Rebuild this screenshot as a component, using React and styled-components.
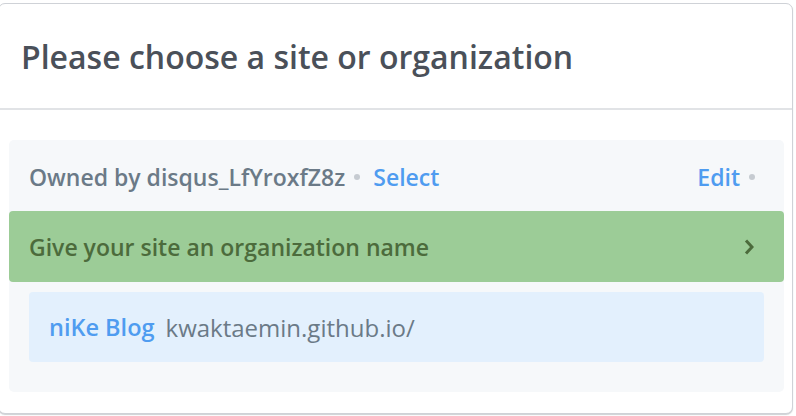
import React from "react";
import styled, { createGlobalStyle } from "styled-components";

const GlobalStyle = createGlobalStyle`
  html, body {
    margin: 0;
    padding: 0;
    background: #ffffff;
  }
  body {
    font-family: "Source Sans Pro", "Open Sans", "Noto Sans", sans-serif;
    -webkit-font-smoothing: antialiased;
  }
`;

const Page = styled.div`
  width: 796px;
  height: 416px;
  overflow: hidden;
  padding-top: 3px;
  box-sizing: border-box;
`;

const Card = styled.section`
  width: 795px;
  height: 411px;
  margin-left: -2px;
  box-sizing: border-box;
  background: #fff;
  border: 1px solid #cfd2d7;
  border-radius: 7px;
  box-shadow: 0 1px 1px rgba(60, 70, 85, 0.25);
  display: flex;
  flex-direction: column;
`;

const Header = styled.header`
  height: 106px;
  box-sizing: border-box;
  display: flex;
  align-items: center;
  padding: 0 0 0 22px;
  border-bottom: 2px solid #e1e3e6;
`;

const Title = styled.h1`
  margin: 0;
  font-size: 32px;
  font-weight: 600;
  color: #4a5059;
`;

const Body = styled.div`
  padding: 30px 8px 0 10px;
`;

const Panel = styled.div`
  background: #f6f8fa;
  border-radius: 5px;
  padding-bottom: 30px;
`;

const OwnerRow = styled.div`
  height: 68px;
  display: flex;
  align-items: center;
  padding: 3px 29px 0 20px;
  font-size: 23px;
  font-weight: 600;
  color: #6b7a87;
`;

const Dot = styled.span`
  display: inline-block;
  flex: none;
  width: 6px;
  height: 6px;
  border-radius: 50%;
  background: #c6cbd1;
  margin: 0 ${(p) => p.$right ?? 13}px 0 9px;
`;

const Link = styled.a`
  color: #4f9cf0;
  text-decoration: none;
  cursor: pointer;
`;

const Spacer = styled.div`
  flex: 1;
`;

const OrgBar = styled.div`
  height: 71px;
  display: flex;
  align-items: center;
  justify-content: space-between;
  padding: 0 30px 0 20px;
  background: #9ccc97;
  border-radius: 4px;
  font-size: 23px;
  font-weight: 600;
  color: #4c6b3c;
`;

const SiteList = styled.div`
  padding: 10px 20px 0 20px;
`;

const SiteItem = styled.div`
  height: 70px;
  display: flex;
  align-items: center;
  gap: 11px;
  padding: 0 20px;
  background: #e3f0fd;
  border-radius: 4px;
  font-size: 23.5px;
`;

const SiteName = styled.span`
  font-weight: 600;
  color: #4f9cf0;
`;

const SiteUrl = styled.span`
  font-size: 24px;
  color: #6b7a87;
`;

const Chevron = () => (
  <svg width="10" height="18" viewBox="0 0 10 18" fill="none">
    <path d="M2 2.5l6 6.5-6 6.5" stroke="#4c6b3c" strokeWidth="3" />
  </svg>
);

export default function App() {
  return (
    <Page>
      <GlobalStyle />
      <Card>
        <Header>
          <Title>Please choose a site or organization</Title>
        </Header>
        <Body>
          <Panel>
            <OwnerRow>
              Owned by disqus_LfYroxfZ8z
              <Dot />
              <Link>Select</Link>
              <Spacer />
              <Link>Edit</Link>
              <Dot $right={0} />
            </OwnerRow>
            <OrgBar>
              Give your site an organization name
              <Chevron />
            </OrgBar>
            <SiteList>
              <SiteItem>
                <SiteName>niKe Blog</SiteName>
                <SiteUrl>kwaktaemin.github.io/</SiteUrl>
              </SiteItem>
            </SiteList>
          </Panel>
        </Body>
      </Card>
    </Page>
  );
}
